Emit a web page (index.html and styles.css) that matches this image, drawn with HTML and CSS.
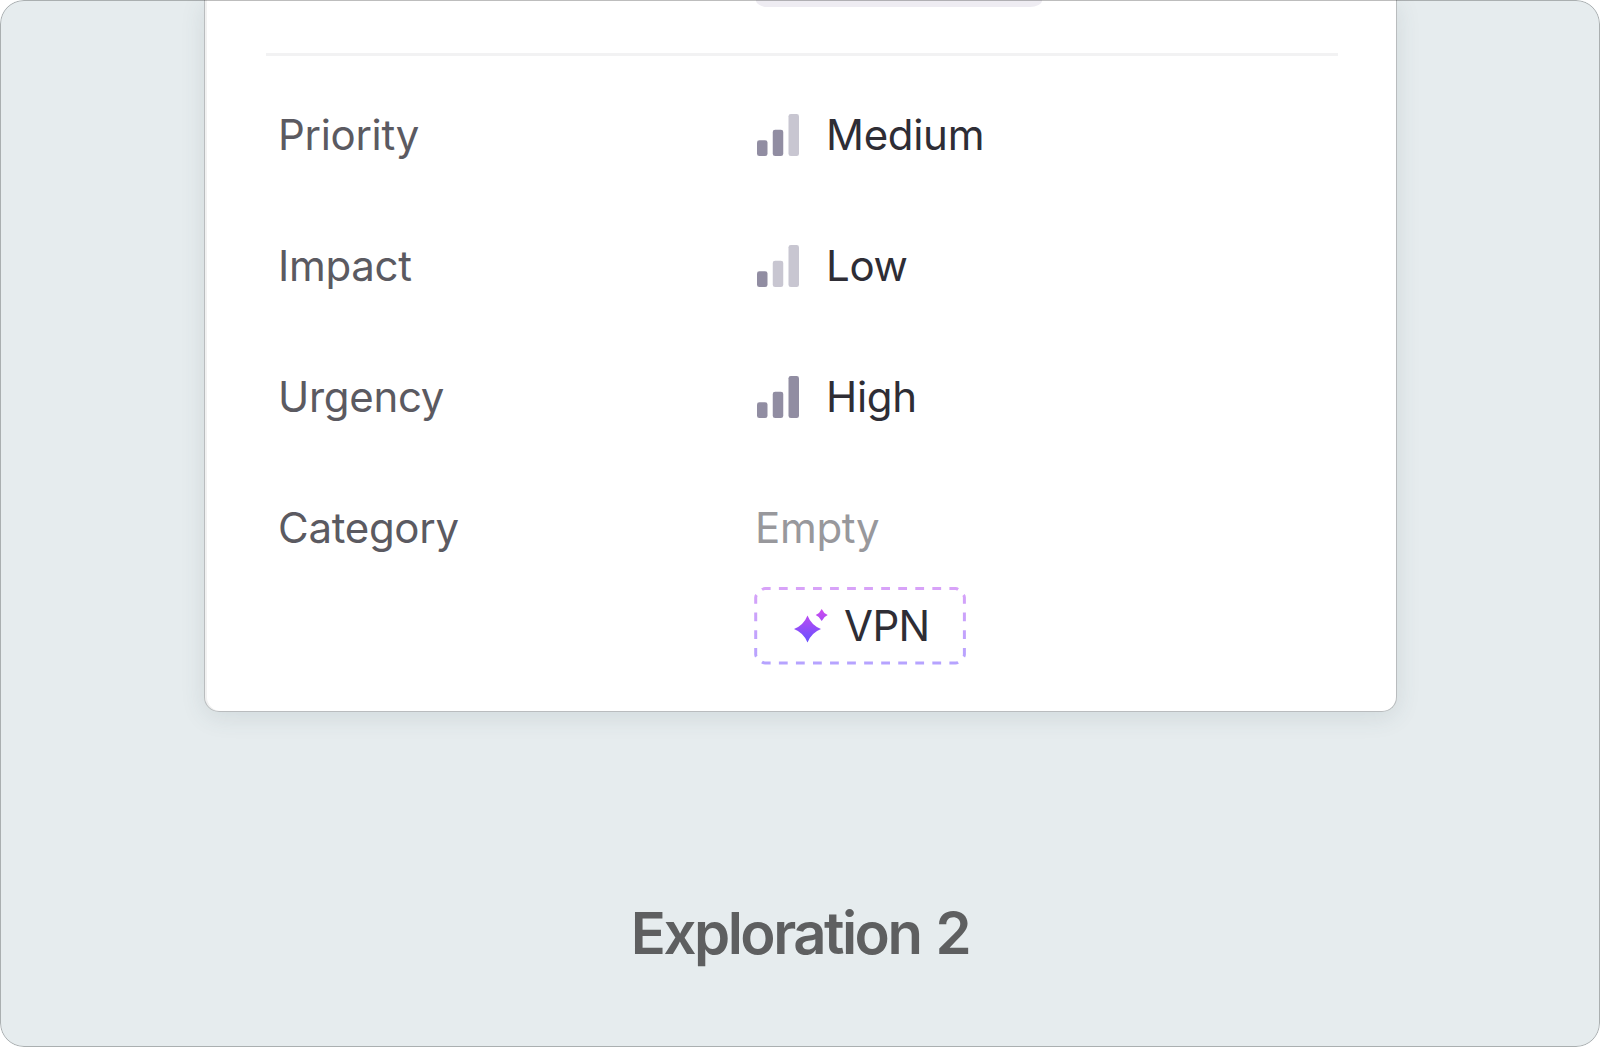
FILE: index.html
```html
<!DOCTYPE html>
<html lang="en">
<head>
    <meta charset="UTF-8">
    <title>Exploration 2</title>
    <link rel="stylesheet" href="styles.css">
</head>
<body>
    <div class="frame">
        <div class="card">
            <div class="field-top">
                <div class="field-chip"></div>
            </div>
            <div class="divider"></div>

            <div class="fields">
                <div class="field">
                    <div class="label">Priority</div>
                    <div class="value">
                        <svg class="bars" viewBox="0 0 16 16">
                            <rect class="on" x="0" y="10" width="4" height="6" rx="0.9"/>
                            <rect class="on" x="6" y="6" width="4" height="10" rx="0.9"/>
                            <rect class="off" x="12" y="0" width="4" height="16" rx="0.9"/>
                        </svg>
                        <span>Medium</span>
                    </div>
                </div>

                <div class="field">
                    <div class="label">Impact</div>
                    <div class="value">
                        <svg class="bars" viewBox="0 0 16 16">
                            <rect class="on" x="0" y="10" width="4" height="6" rx="0.9"/>
                            <rect class="off" x="6" y="6" width="4" height="10" rx="0.9"/>
                            <rect class="off" x="12" y="0" width="4" height="16" rx="0.9"/>
                        </svg>
                        <span>Low</span>
                    </div>
                </div>

                <div class="field">
                    <div class="label">Urgency</div>
                    <div class="value">
                        <svg class="bars" viewBox="0 0 16 16">
                            <rect class="on" x="0" y="10" width="4" height="6" rx="0.9"/>
                            <rect class="on" x="6" y="6" width="4" height="10" rx="0.9"/>
                            <rect class="on" x="12" y="0" width="4" height="16" rx="0.9"/>
                        </svg>
                        <span>High</span>
                    </div>
                </div>

                <div class="field">
                    <div class="label">Category</div>
                    <div class="value empty">Empty</div>
                </div>
            </div>

            <div class="suggestion">
                <svg class="suggestion-border" viewBox="0 0 212 78">
                    <defs>
                        <linearGradient id="dash" gradientUnits="userSpaceOnUse" x1="0" y1="0" x2="0" y2="78">
                            <stop offset="0" stop-color="#d8a2f8"/>
                            <stop offset="1" stop-color="#b5a3ff"/>
                        </linearGradient>
                    </defs>
                    <g fill="none" stroke="url(#dash)" stroke-width="3">
                        <path stroke-dasharray="8.8 8.25" d="M8 2.6 Q9.4 1.6 11 1.6 H201.500 Q203.100 1.600 204.300 2.600"/>
                        <path stroke-dasharray="8.8 8.25" d="M8 75 Q9.4 76 11 76 H201.500 Q203.100 76 204.300 75"/>
                        <path stroke-dasharray="8.8 8.88" d="M2.600 8 Q1.700 9 1.700 10.400 V67.500 Q1.700 69 2.600 70"/>
                        <path stroke-dasharray="8.8 8.88" d="M209.500 8 Q210.400 9 210.400 10.400 V67.500 Q210.400 69 209.500 70"/>
                    </g>
                </svg>
                <svg class="sparkle" viewBox="0 0 34 34">
                    <defs>
                        <linearGradient id="spark" gradientUnits="userSpaceOnUse" x1="0" y1="0" x2="0" y2="34">
                            <stop offset="0" stop-color="#cf4aef"/>
                            <stop offset="1" stop-color="#6450ff"/>
                        </linearGradient>
                    </defs>
                    <path fill="url(#spark)" d="M13.500 6.500 Q17.300 16.200 27 20 Q17.300 23.800 13.500 33.500 Q9.700 23.800 0 20 Q9.700 16.200 13.500 6.500 Z"/>
                    <path fill="url(#spark)" d="M27.700 0 Q29.500 4.200 33.700 6 Q29.500 7.800 27.700 12 Q25.900 7.800 21.700 6 Q25.900 4.200 27.700 0 Z"/>
                </svg>
                <span>VPN</span>
            </div>
        </div>

        <h1 class="caption">Exploration 2</h1>
    </div>
</body>
</html>
```

FILE: styles.css
```css
* {
    margin: 0;
    padding: 0;
    box-sizing: border-box;
}

body {
    background: #fff;
    font-family: Inter, sans-serif;
}

.frame {
    position: relative;
    width: 1600px;
    height: 1047px;
    background: #e6ecee;
    border-radius: 24px;
    overflow: hidden;
}

/* outline is drawn over the card as well */
.frame::after {
    content: "";
    position: absolute;
    inset: 0;
    border: 1px solid rgba(0, 0, 0, 0.26);
    border-radius: 24px;
}

.card {
    width: 1193px;
    height: 712px;
    margin-left: 204px;
    padding: 0 58px 0 61px;
    background: #fff;
    border: 1px solid #b9bcbe;
    border-top: none;
    border-radius: 0 0 15px 15px;
    box-shadow: inset 2px 0 0 #f1f1f1, 0 5px 24px rgba(60, 80, 90, 0.12);
}

.field-top {
    height: 53px;
    padding-left: 490px;
}

.field-chip {
    width: 286px;
    height: 6.5px;
    background: #eeecf2;
    border-radius: 0 0 12px 12px / 0 0 6.5px 6.5px;
}

.divider {
    height: 3px;
    background: #f2f2f3;
}

.fields {
    display: flex;
    flex-direction: column;
    gap: 79px;
    padding: 53px 0 0 12px;
}

.field {
    display: grid;
    grid-template-columns: 477px 1fr;
    align-items: center;
    height: 52px;
    font-size: 42px;
    font-weight: 370;
    line-height: 52px;
    letter-spacing: -0.3px;
}

.label {
    color: #5b5a61;
}

.value {
    display: flex;
    align-items: center;
    gap: 27px;
    padding-left: 2px;
    color: #2e2d35;
}

.value.empty {
    padding-left: 0;
    color: #98989c;
}

.bars {
    width: 42px;
    height: 42px;
}

.on {
    fill: #918da2;
}

.off {
    fill: #c8c6d1;
}

.suggestion {
    position: relative;
    display: flex;
    align-items: center;
    gap: 16px;
    width: 212px;
    height: 78px;
    margin: 33px 0 0 488px;
    padding-left: 40px;
    color: #2e2d35;
    font-size: 42px;
    font-weight: 370;
    line-height: 52px;
    letter-spacing: -0.6px;
}

.suggestion-border {
    position: absolute;
    inset: 0;
    width: 212px;
    height: 78px;
}

.sparkle {
    width: 34px;
    height: 34px;
}

.caption {
    margin-top: 185px;
    color: #5e5f60;
    font-size: 58px;
    font-weight: 600;
    line-height: 72px;
    letter-spacing: -2.5px;
    word-spacing: 3px;
    text-align: center;
}
```
